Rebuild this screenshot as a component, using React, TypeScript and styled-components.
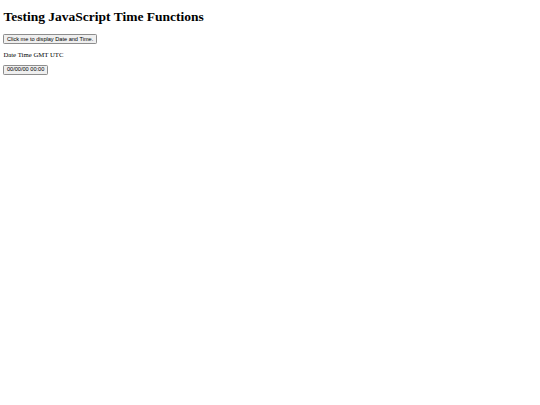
import styled, { createGlobalStyle } from 'styled-components';

const GlobalStyle = createGlobalStyle`
  html, body {
    margin: 0;
    background: #fff;
  }
`;

// the reference is a 1280px wide page shown at 540px
const Page = styled.main`
  zoom: 0.421875;
  padding: 0 8px 8px;
  font-family: 'Liberation Serif', 'Times New Roman', serif;
  font-size: 16px;
  color: #000;
`;

const Heading = styled.h1`
  font-size: 32px;
  font-weight: bold;
  margin: 21.44px 0;
`;

const Text = styled.p`
  margin: 16px 0;
`;

const Button = styled.button`
  font-family: 'Liberation Sans', Arial, sans-serif;
  font-size: 13.333px;
  line-height: 15px;
  color: #000;
  background: #efefef;
  border: 1px solid #8d8d8d;
  border-radius: 3px;
  padding: 2px 6px;
  cursor: pointer;
`;

export default function App() {
  return (
    <>
      <GlobalStyle />
      <Page>
        <Heading>Testing JavaScript Time Functions</Heading>
        <Button>Click me to display Date and Time.</Button>
        <Text>Date Time GMT UTC</Text>
        <Button>00/00/00 00:00</Button>
      </Page>
    </>
  );
}
